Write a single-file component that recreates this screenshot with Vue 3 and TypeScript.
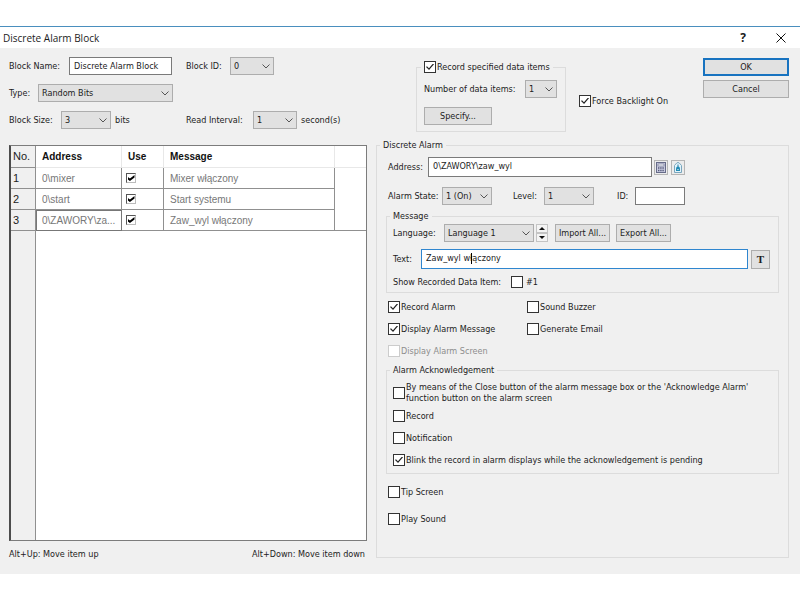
<script setup lang="ts">
import { ref } from 'vue'

interface AlarmItem {
  address: string
  label: string
  use: boolean
  message: string
}

const blockName = ref('Discrete Alarm Block')
const recordItems = ref(true)
const forceBacklight = ref(true)
const selected = ref(2)

const items = ref<AlarmItem[]>([
  { address: '0\\mixer', label: '0\\mixer', use: true, message: 'Mixer włączony' },
  { address: '0\\start', label: '0\\start', use: true, message: 'Start systemu' },
  { address: '0\\ZAWORY\\zaw_wyl', label: '0\\ZAWORY\\za...', use: true, message: 'Zaw_wyl włączony' },
])

const address = ref('0\\ZAWORY\\zaw_wyl')
const alarmId = ref('')
const text = ref('Zaw_wyl włączony')
const showItem = ref(false)

const options = ref([
  { label: 'Record Alarm', on: true, disabled: false },
  { label: 'Sound Buzzer', on: false, disabled: false },
  { label: 'Display Alarm Message', on: true, disabled: false },
  { label: 'Generate Email', on: false, disabled: false },
  { label: 'Display Alarm Screen', on: false, disabled: true },
])

const acknowledgements = ref([
  { label: 'Record', on: false },
  { label: 'Notification', on: false },
  { label: 'Blink the record in alarm displays while the acknowledgement is pending', on: true },
])
const ackByClose = ref(false)
const tipScreen = ref(false)
const playSound = ref(false)
</script>

<template>
  <main class="window">
    <header class="titlebar">
      <h1>Discrete Alarm Block</h1>
      <button class="caption" type="button" aria-label="Help">?</button>
      <button class="caption" type="button" aria-label="Close">
        <svg width="10" height="10" viewBox="0 0 10 10"><path d="M0.5 0.5L9.5 9.5M9.5 0.5L0.5 9.5" stroke="#111" fill="none" /></svg>
      </button>
    </header>

    <form class="body" @submit.prevent>
      <section class="top">
        <div class="settings">
          <div class="line">
            <div class="cell">
              <label class="w60" for="name">Block Name:</label>
              <input id="name" v-model="blockName" class="name" type="text" />
            </div>
            <label class="w44" for="block-id">Block ID:</label>
            <select id="block-id" class="s44"><option>0</option></select>
          </div>
          <div class="line">
            <label class="w29" for="type">Type:</label>
            <select id="type" class="s135"><option>Random Bits</option></select>
          </div>
          <div class="line">
            <div class="cell">
              <label class="w52" for="size">Block Size:</label>
              <select id="size" class="s50"><option>3</option></select>
              <span class="unit">bits</span>
            </div>
            <label class="w67" for="interval">Read Interval:</label>
            <select id="interval" class="s44"><option>1</option></select>
            <span class="unit">second(s)</span>
          </div>
        </div>

        <fieldset class="record">
          <legend><label class="check"><input v-model="recordItems" type="checkbox" />Record specified data items</label></legend>
          <div class="line spread">
            <label for="count">Number of data items:</label>
            <select id="count" class="s32"><option>1</option></select>
          </div>
          <button class="btn specify" type="button">Specify...</button>
        </fieldset>

        <label class="check backlight"><input v-model="forceBacklight" type="checkbox" />Force Backlight On</label>

        <div class="actions">
          <button class="btn primary" type="submit">OK</button>
          <button class="btn" type="button">Cancel</button>
        </div>
      </section>

      <section class="bottom">
        <div class="left">
          <div class="list">
            <table>
              <colgroup><col class="c-no" /><col class="c-address" /><col class="c-use" /><col class="c-message" /><col /></colgroup>
              <thead>
                <tr><th class="no">No.</th><th>Address</th><th>Use</th><th>Message</th><th class="rest"></th></tr>
              </thead>
              <tbody>
                <tr v-for="(item, i) in items" :key="item.address" @click="selected = i">
                  <th class="no" scope="row">{{ i + 1 }}</th>
                  <td :class="{ selected: selected === i }" :title="item.address">{{ item.label }}</td>
                  <td><input v-model="item.use" class="use" type="checkbox" :aria-label="'Use ' + item.address" /></td>
                  <td>{{ item.message }}</td>
                  <td class="rest"></td>
                </tr>
              </tbody>
            </table>
            <div class="gutter"></div>
          </div>
          <div class="hints"><span>Alt+Up: Move item up</span><span>Alt+Down: Move item down</span></div>
        </div>

        <fieldset class="alarm">
          <legend>Discrete Alarm</legend>
          <div class="line address">
            <label class="w40" for="address">Address:</label>
            <input id="address" v-model="address" class="tall" type="text" />
            <button class="icon" type="button" aria-label="Keypad">
              <svg width="10" height="11" viewBox="0 0 10 11">
                <rect x="0.5" y="0.5" width="9" height="10" fill="#c9cbe0" stroke="#666b88" />
                <rect x="2" y="2" width="6" height="2" fill="#f4f5fb" stroke="#666b88" stroke-width="0.6" />
                <path d="M2 6H8M2 8.5H8" stroke="#555a78" stroke-width="1.3" stroke-dasharray="1.4 0.8" />
              </svg>
            </button>
            <button class="icon" type="button" aria-label="Tag">
              <svg width="10" height="11" viewBox="0 0 10 11">
                <path d="M1.5 10.5V3.5L4 0.7H6L8.5 3.5V10.5Z" fill="#e2f3fa" stroke="#7aa6bd" />
                <path d="M5 2.5V5" stroke="#287ba5" />
                <path d="M3 9V6.5Q3 4.5 5 4.5T7 6.5V9Z" fill="#218bb5" />
                <path d="M4.5 7.5H5.5" stroke="#fff" />
              </svg>
            </button>
          </div>
          <div class="line state">
            <label class="w54" for="state">Alarm State:</label>
            <select id="state" class="s50"><option>1 (On)</option></select>
            <label class="w31 level" for="level">Level:</label>
            <select id="level" class="s50"><option>1</option></select>
            <label class="w18 id" for="alarm-id">ID:</label>
            <input id="alarm-id" v-model="alarmId" class="s50" type="text" />
          </div>

          <fieldset class="inner message">
            <legend>Message</legend>
            <div class="line">
              <label class="w51" for="language">Language:</label>
              <select id="language" class="s90"><option>Language 1</option></select>
              <span class="spin">
                <button type="button" aria-label="Previous language"><svg width="6" height="3" viewBox="0 0 6 3"><path d="M3 0L6 3H0Z" fill="#111" /></svg></button>
                <button type="button" aria-label="Next language"><svg width="6" height="3" viewBox="0 0 6 3"><path d="M0 0H6L3 3Z" fill="#111" /></svg></button>
              </span>
              <button class="btn file" type="button">Import All...</button>
              <button class="btn file" type="button">Export All...</button>
            </div>
            <div class="line text">
              <label class="w28" for="text">Text:</label>
              <span class="edit">
                <input id="text" v-model="text" class="tall active" type="text" />
                <i class="caret"></i>
              </span>
              <button class="btn font" type="button" aria-label="Font">T</button>
            </div>
            <div class="line show">
              <span class="w118">Show Recorded Data Item:</span>
              <label class="check wide"><input v-model="showItem" type="checkbox" />#1</label>
            </div>
          </fieldset>

          <div class="options">
            <label v-for="o in options" :key="o.label" class="check" :class="{ off: o.disabled }">
              <input v-model="o.on" type="checkbox" :disabled="o.disabled" />{{ o.label }}
            </label>
          </div>

          <fieldset class="inner ack">
            <legend>Alarm Acknowledgement</legend>
            <label class="check two">
              <input v-model="ackByClose" type="checkbox" />
              <span>By means of the Close button of the alarm message box or the 'Acknowledge Alarm'<br />function button on the alarm screen</span>
            </label>
            <label v-for="a in acknowledgements" :key="a.label" class="check">
              <input v-model="a.on" type="checkbox" />{{ a.label }}
            </label>
          </fieldset>

          <div class="extras">
            <label class="check"><input v-model="tipScreen" type="checkbox" />Tip Screen</label>
            <label class="check"><input v-model="playSound" type="checkbox" />Play Sound</label>
          </div>
        </fieldset>
      </section>
    </form>
  </main>
</template>

<style>
body {
  background: #fff;
}
</style>

<style scoped>
.window,
.window * {
  box-sizing: border-box;
}
.window {
  margin-top: 26px;
  border-top: 1px solid #4a8fbe;
  background: #fff;
  color: #1c1c1c;
  font: 9px/12px "DejaVu Sans Condensed", "Noto Sans", sans-serif;
}
.titlebar {
  display: flex;
  align-items: center;
  height: 21px;
  padding: 0 9px 0 3px;
}
h1 {
  flex: 1;
  margin: 0;
  font: 10px/16px "Open Sans", "Noto Sans", sans-serif;
}
.caption {
  display: grid;
  place-items: center;
  width: 20px;
  height: 20px;
  margin-left: 18px;
  padding: 0;
  border: 0;
  background: none;
  font: bold 12px/16px "Open Sans", sans-serif;
}
.body {
  padding: 9px 11px 14px 9px;
  background: #f0f0f0;
}
input,
select,
button {
  margin: 0;
  font: inherit;
  color: inherit;
}
input[type="text"] {
  height: 18px;
  padding: 0 4px;
  border: 1px solid #7a7a7a;
  border-radius: 0;
  background: #fff;
  line-height: 16px;
  outline: none;
}
input.tall[type="text"] {
  flex: 1;
  min-width: 0;
  height: 20px;
  padding-bottom: 2px;
}
select {
  flex: none;
  appearance: none;
  height: 18px;
  padding: 0 0 0 3px;
  border: 1px solid #adadad;
  border-radius: 0;
  background: #e1e1e1 url("data:image/svg+xml,%3Csvg xmlns='http://www.w3.org/2000/svg' width='8' height='5'%3E%3Cpath d='M0.5 0.5L4 4L7.5 0.5' fill='none' stroke='%23555'/%3E%3C/svg%3E") no-repeat right 3px center;
}
.btn {
  height: 18px;
  padding: 0;
  border: 1px solid #adadad;
  background: #e1e1e1;
  white-space: nowrap;
}
.btn.primary {
  border: 2px solid #1873c0;
}
fieldset {
  min-width: 0;
  margin: 0;
  padding: 0;
  border: 1px solid #dcdcdc;
}
legend {
  margin-left: 4px;
  padding: 0 3px;
  line-height: 12px;
}
.line {
  display: flex;
  align-items: center;
  white-space: nowrap;
}
.spread {
  justify-content: space-between;
}
.check {
  display: flex;
  align-items: center;
  gap: 1px;
  white-space: nowrap;
}
.check input {
  flex: none;
  display: grid;
  place-items: center;
  appearance: none;
  width: 12px;
  height: 12px;
  border: 1px solid #333;
  background: #fff;
}
.check input:checked::before {
  content: "";
  width: 8px;
  height: 7px;
  background: #222;
  clip-path: polygon(0 50%, 12% 38%, 37% 68%, 88% 0, 100% 10%, 38% 94%);
}
.check.off {
  color: #8d8d8d;
}
.check.off input {
  border-color: #ccc;
}
.check.wide {
  gap: 3px;
}

.w18 { width: 18px; }
.w28 { width: 28px; }
.w29 { width: 29px; }
.w31 { width: 31px; }
.w40 { width: 40px; }
.w44 { width: 44px; }
.w51 { width: 51px; }
.w52 { width: 52px; }
.w54 { width: 54px; }
.w60 { width: 60px; }
.w67 { width: 67px; }
.w118 { width: 118px; }
.s32 { width: 32px; }
.s44 { width: 44px; }
.s50 { width: 50px; }
.s90 { width: 90px; }
.s135 { width: 135px; }

.top {
  display: flex;
  align-items: flex-start;
  height: 82px;
}
.settings {
  display: flex;
  flex-direction: column;
  gap: 9px;
  flex: 1;
}
.cell {
  display: flex;
  align-items: center;
  width: 177px;
}
.name {
  width: 103px;
}
.unit {
  margin-left: 4px;
}
.record {
  width: 150px;
  margin-top: 4px;
  padding: 0 8px 6px 7px;
}
.record legend {
  margin-left: -3px;
}
.record .line {
  margin-top: 7px;
}
.specify {
  width: 68px;
  margin-top: 9px;
}
.backlight {
  width: 124px;
  margin: 38px 0 0 13px;
}
.actions {
  display: grid;
  gap: 4px;
  width: 86px;
  margin-top: 1px;
}

.bottom {
  display: grid;
  grid-template-columns: minmax(0, 358fr) minmax(0, 413fr);
  gap: 9px;
}
.left {
  display: flex;
  flex-direction: column;
  padding-top: 6px;
}
.list {
  display: flex;
  flex-direction: column;
  flex: 1;
  border: 1px solid #7c7c7c;
  border-left: 2px solid #4c4c4c;
  background: #fff;
}
table {
  width: 100%;
  table-layout: fixed;
  border-collapse: separate;
  border-spacing: 0;
  color: #777;
  font: 10px/13px "Liberation Sans", Arial, sans-serif;
}
.c-no { width: 25px; }
.c-address { width: 86px; }
.c-use { width: 42px; }
.c-message { width: 171px; }
th,
td {
  height: 21px;
  padding: 0 6px;
  border-right: 1px solid #909090;
  border-bottom: 1px solid #909090;
  text-align: left;
  white-space: nowrap;
}
td:nth-child(3) {
  padding-left: 4px;
}
thead th {
  height: 22px;
  border-color: #e8e8e8;
  color: #111;
}
th.no {
  padding: 0 2px;
  border-color: #909090;
  background: #f0f0f0;
  color: #222;
  font-weight: normal;
  font-size: 11px;
}
.rest {
  border-right: 0;
}
tbody tr:not(:last-child) .rest {
  border-bottom: 0;
}
td.selected {
  outline: 1px solid #777;
  outline-offset: -1px;
}
.use {
  display: grid;
  place-items: center;
  appearance: none;
  width: 10px;
  height: 10px;
  border: 1px solid #bbb;
  border-top-color: #555;
  border-left-color: #555;
  background: #fff;
}
.use:checked::before {
  content: "";
  width: 7px;
  height: 6px;
  background: #000;
  clip-path: polygon(0 30%, 35% 60%, 100% 0, 100% 40%, 35% 100%, 0 70%);
}
.gutter {
  flex: 1;
  width: 25px;
  border-right: 1px solid #909090;
  background: #f0f0f0;
}
.hints {
  display: flex;
  justify-content: space-between;
  padding: 7px 2px 0 0;
}

.alarm {
  height: 419px;
  margin-bottom: 2px;
  padding: 0 9px;
}
.alarm > legend {
  margin-left: -6px;
}
.address {
  margin: 6px 94px 0 2px;
}
.icon {
  display: grid;
  place-items: center;
  width: 14px;
  height: 15px;
  margin-left: 2px;
  padding: 0;
  border: 1px solid #b5b5b5;
  background: #ececec;
}
.icon + .icon {
  margin-left: 3px;
}
.state {
  margin: 10px 0 0 2px;
}
.level {
  margin-left: 21px;
}
.id {
  margin-left: 23px;
}
.inner {
  padding: 0 8px 0 6px;
}
.inner > legend {
  margin-left: -3px;
}
.message {
  margin-top: 5px;
  padding-bottom: 4px;
}
.message .line:first-of-type {
  margin-top: 2px;
}
.spin {
  display: grid;
  width: 12px;
  height: 18px;
  margin: 0 7px 0 2px;
}
.spin button {
  display: grid;
  place-items: center;
  padding: 0;
  border: 1px solid #c4c4c4;
  background: #f4f4f4;
}
.file {
  width: 55px;
  margin-right: 6px;
}
.text {
  margin-top: 7px;
}
.edit {
  display: flex;
  flex: 1;
  position: relative;
}
input.active[type="text"] {
  border-color: #2f86cf;
}
.caret {
  position: absolute;
  top: 4px;
  left: 50px;
  width: 1px;
  height: 11px;
  background: #000;
}
.font {
  width: 19px;
  height: 19px;
  margin-left: 3px;
  font: bold 11px/13px "Liberation Serif", serif;
}
.show {
  margin-top: 7px;
}
.options {
  display: grid;
  grid-template-columns: 139px 1fr;
  gap: 10px 0;
  margin: 8px 0 0 2px;
}
.ack {
  display: grid;
  gap: 10px;
  margin-top: 7px;
  padding-bottom: 7px;
}
.ack .two {
  line-height: 11px;
  margin-top: 6px;
  margin-bottom: -4px;
}
.extras {
  display: grid;
  gap: 15px;
  margin: 12px 0 0 2px;
}
</style>
